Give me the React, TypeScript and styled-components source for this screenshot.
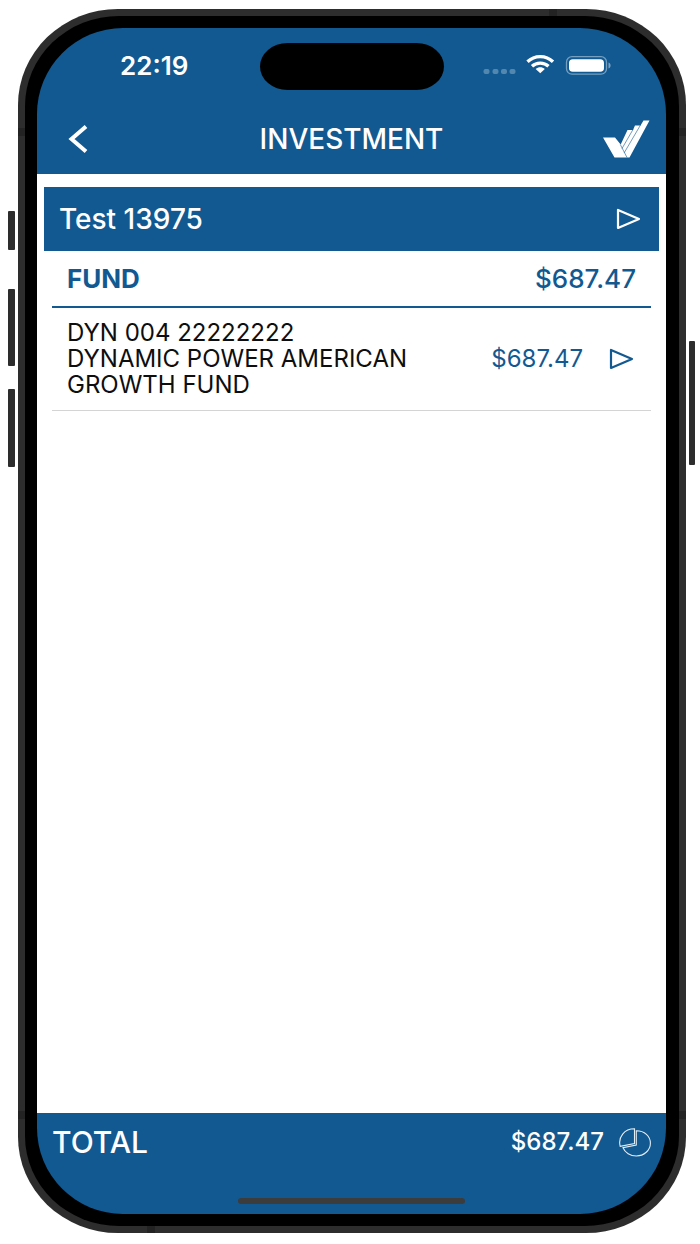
import React from "react";
import styled, { createGlobalStyle } from "styled-components";

const blue = "#125991";
const ink = "#0e0e0e";

const GlobalStyle = createGlobalStyle`
  *, *::before, *::after { box-sizing: border-box; }
  body {
    margin: 0;
    background: #ffffff;
    font-family: Inter, "Liberation Sans", sans-serif;
  }
  h1, h2, p, ul { margin: 0; padding: 0; }
  ul { list-style: none; }
`;

const Stage = styled.main`
  display: flex;
  min-height: 100vh;
  padding: 9px 14px 11px 18px;
`;

const Casing = styled.div`
  position: relative;
  display: flex;
  flex: 1;
  padding: 7px;
  border-radius: 100px / 96px;
  background: #2d2d2d;
`;

const SideKey = styled.span<{ $side: "left" | "right"; $top: number; $length: number }>`
  position: absolute;
  top: ${(p) => p.$top}px;
  ${(p) => (p.$side === "left" ? "left: -10px" : "right: -9px")};
  width: ${(p) => (p.$side === "left" ? 7 : 6)}px;
  height: ${(p) => p.$length}px;
  border-radius: 1px;
  background: #2d2d2d;
`;

const Antenna = styled.span<{ $edge: "left" | "right" | "top" | "bottom"; $from: "start" | "end" }>`
  position: absolute;
  background: #232323;
  ${(p) =>
    p.$edge === "left" || p.$edge === "right"
      ? `${p.$edge}: 0; ${p.$from === "start" ? "top: 119px" : "bottom: 114px"}; width: 7px; height: 8px;`
      : `${p.$edge}: 0; ${p.$from === "start" ? "left" : "right"}: 129px; width: 8px; height: 7px;`}
`;

const Bezel = styled.div`
  position: relative;
  display: flex;
  flex: 1;
  padding: 12px 13px 12px 12px;
  border-radius: 94px / 90px;
  background: #000000;
`;

const Screen = styled.div`
  display: flex;
  flex: 1;
  flex-direction: column;
  overflow: hidden;
  border-radius: 86px;
  background: ${blue};
`;

const TopArea = styled.header`
  color: #ffffff;
`;

const StatusBar = styled.div`
  display: grid;
  grid-template-columns: 1fr 184px 1fr;
  height: 76px;
  align-items: center;
`;

const Clock = styled.time`
  padding-left: 12px;
  font-size: 26px;
  font-weight: 600;
  line-height: 32px;
  text-align: center;
`;

const Island = styled.div`
  height: 47px;
  border-radius: 28px / 24px;
  background: #000000;
`;

const StatusIcons = styled.div`
  display: flex;
  align-items: center;
  padding-left: 39px;
`;

const NavBar = styled.div`
  display: grid;
  grid-template-columns: 80px 1fr 80px;
  height: 70px;
  align-items: center;
`;

const Title = styled.h1`
  font-size: 28px;
  font-weight: 500;
  line-height: 36px;
  text-align: center;
`;

const IconButton = styled.button`
  display: flex;
  padding: 0;
  border: 0;
  background: none;
  color: inherit;
  cursor: pointer;
`;

const BackButton = styled(IconButton)`
  padding-left: 30px;
`;

const Brand = styled.div`
  display: flex;
  justify-content: flex-end;
  padding-right: 16px;
`;

const Content = styled.section`
  flex: 1;
  padding: 13px 7px;
  background: #ffffff;
`;

const AccountBar = styled.div`
  display: flex;
  height: 64px;
  align-items: center;
  justify-content: space-between;
  padding: 0 18px 0 15px;
  background: ${blue};
  color: #ffffff;
`;

const AccountName = styled.h2`
  font-size: 28px;
  font-weight: 500;
  line-height: 36px;
`;

const Holdings = styled.div`
  padding: 0 8px;
`;

const GroupHeading = styled.div`
  display: flex;
  height: 57px;
  align-items: center;
  justify-content: space-between;
  padding: 0 15px;
  border-bottom: 2px solid ${blue};
  color: ${blue};
`;

const GroupName = styled.h2`
  font-size: 26px;
  font-weight: 700;
  line-height: 32px;
`;

const GroupAmount = styled.span`
  font-size: 26px;
  font-weight: 500;
  line-height: 32px;
`;

const Amount = styled.span<{ $strong?: boolean }>`
  font-size: 24px;
  font-weight: ${(p) => (p.$strong ? 500 : 400)};
  line-height: 26px;
`;

const Holding = styled.li`
  display: flex;
  align-items: center;
  padding: 12px 17px 12px 15px;
  border-bottom: 1px solid #d4d4d4;
  color: ${blue};
`;

const HoldingName = styled.p`
  flex: 1;
  color: ${ink};
  font-size: 24px;
  line-height: 26px;
`;

const HoldingLine = styled.span`
  display: block;
  white-space: nowrap;
`;

const HoldingAmount = styled(Amount)`
  padding-right: 26px;
`;

const Footer = styled.footer`
  display: flex;
  height: 101px;
  flex-direction: column;
  align-items: center;
  justify-content: space-between;
  padding: 11px 15px 10px 15px;
  color: #ffffff;
`;

const TotalRow = styled.div`
  display: flex;
  width: 100%;
  align-items: center;
`;

const TotalLabel = styled.h2`
  flex: 1;
  font-size: 30px;
  font-weight: 500;
  line-height: 36px;
`;

const TotalAmount = styled(Amount)`
  padding-right: 15px;
`;

const HomeBar = styled.div`
  width: 38%;
  height: 6px;
  border-radius: 3px;
  background: #3c3c3c;
`;

const SignalWifiBattery = () => (
  <svg width="130" height="24" viewBox="0 0 130 24" aria-hidden="true">
    <g fill="#ffffff" opacity="0.28">
      <rect x="0.500" y="15" width="6" height="5" rx="2" />
      <rect x="9.500" y="15" width="6" height="5" rx="2" />
      <rect x="18" y="15" width="6" height="5" rx="2" />
      <rect x="26.500" y="15" width="6" height="5" rx="2" />
    </g>
    <g fill="none" stroke="#ffffff" strokeWidth="3.300">
      <path d="M44.500 7.700C51.500 0.800 63 0.800 70 7.700" />
      <path d="M49 12.300C53.500 8.100 61 8.100 65.500 12.300" />
    </g>
    <path d="M52.700 14.900C55.300 12.600 59.200 12.600 61.800 14.900L57.250 19.200Z" fill="#ffffff" />
    <rect x="83.500" y="2.700" width="40" height="17.500" rx="5.500" fill="none" stroke="#ffffff" strokeOpacity="0.42" strokeWidth="1.300" />
    <rect x="86" y="5.200" width="35" height="12.500" rx="3.800" fill="#ffffff" />
    <path d="M125.500 8.500v6c2.800-1 2.800-5 0-6z" fill="#ffffff" opacity="0.45" />
  </svg>
);

const BackIcon = () => (
  <svg width="22" height="30" viewBox="0 0 22 30" fill="none" stroke="#ffffff" strokeWidth="4" aria-hidden="true">
    <path d="M19 2.500L4.500 15L19 27.500" />
  </svg>
);

const BrandMark = () => (
  <svg width="48" height="38" viewBox="0 0 48 38" aria-hidden="true">
    <path fill="#ffffff" d="M1 17.500H13L18.700 24.500L25.500 10H31L33 5.500H38.500L41.500 0.500H47.500L27.500 37.500H12.500Z" />
    <g fill="none" stroke={blue} strokeWidth="0.600">
      <path d="M18.300 24.500L25 37.500M20 28.500L31 9.500M22.200 32.800L38.500 5" />
    </g>
  </svg>
);

const PlayIcon = () => (
  <svg width="25" height="22" viewBox="0 0 25 22" fill="none" stroke="currentColor" strokeWidth="2.200" strokeLinejoin="round" aria-hidden="true">
    <path d="M2 2V20L23 11Z" />
  </svg>
);

const PieIcon = () => (
  <svg width="32" height="29" viewBox="0 0 32 29" fill="none" stroke="#e3eef6" strokeWidth="1.100" aria-hidden="true">
    <path d="M15.500 0.800V15.500L1.200 18.400C-1.300 9 5.500 0.800 15.500 0.800Z" />
    <path d="M17.300 2.800C25.500 2.800 31.400 8.300 31.400 15.300S25 28 17.300 28C11.300 28 6 24.600 4 19.700L17.300 17Z" />
  </svg>
);

const holdings = [
  { lines: ["DYN 004 22222222", "DYNAMIC POWER AMERICAN", "GROWTH FUND"], amount: "$687.47" },
];

export default function App() {
  return (
    <>
      <GlobalStyle />
      <Stage>
        <Casing>
          <SideKey $side="left" $top={202} $length={39} />
          <SideKey $side="left" $top={280} $length={77} />
          <SideKey $side="left" $top={380} $length={78} />
          <SideKey $side="right" $top={332} $length={124} />
          <Antenna $edge="left" $from="start" />
          <Antenna $edge="right" $from="start" />
          <Antenna $edge="left" $from="end" />
          <Antenna $edge="right" $from="end" />
          <Antenna $edge="top" $from="end" />
          <Antenna $edge="bottom" $from="start" />
          <Bezel>
            <Screen>
              <TopArea>
                <StatusBar>
                  <Clock>22:19</Clock>
                  <Island />
                  <StatusIcons>
                    <SignalWifiBattery />
                  </StatusIcons>
                </StatusBar>
                <NavBar>
                  <BackButton type="button" aria-label="Back">
                    <BackIcon />
                  </BackButton>
                  <Title>INVESTMENT</Title>
                  <Brand>
                    <BrandMark />
                  </Brand>
                </NavBar>
              </TopArea>
              <Content>
                <AccountBar>
                  <AccountName>Test 13975</AccountName>
                  <IconButton type="button" aria-label="Open account">
                    <PlayIcon />
                  </IconButton>
                </AccountBar>
                <Holdings>
                  <GroupHeading>
                    <GroupName>FUND</GroupName>
                    <GroupAmount>$687.47</GroupAmount>
                  </GroupHeading>
                  <ul>
                    {holdings.map((h) => (
                      <Holding key={h.lines[0]}>
                        <HoldingName>
                          {h.lines.map((line) => (
                            <HoldingLine key={line}>{line}</HoldingLine>
                          ))}
                        </HoldingName>
                        <HoldingAmount>{h.amount}</HoldingAmount>
                        <IconButton type="button" aria-label="Open fund">
                          <PlayIcon />
                        </IconButton>
                      </Holding>
                    ))}
                  </ul>
                </Holdings>
              </Content>
              <Footer>
                <TotalRow>
                  <TotalLabel>TOTAL</TotalLabel>
                  <TotalAmount $strong>$687.47</TotalAmount>
                  <IconButton type="button" aria-label="Show allocation">
                    <PieIcon />
                  </IconButton>
                </TotalRow>
                <HomeBar />
              </Footer>
            </Screen>
          </Bezel>
        </Casing>
      </Stage>
    </>
  );
}
